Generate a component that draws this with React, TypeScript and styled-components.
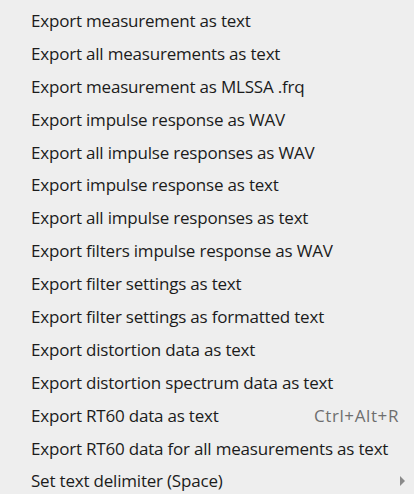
import React from "react";
import styled, { createGlobalStyle } from "styled-components";

const Global = createGlobalStyle`
  html, body { margin: 0; padding: 0; background: #eeeeee; }
  body { width: 414px; height: 494px; overflow: hidden; }
`;

const Menu = styled.ul`
  list-style: none;
  margin: 0;
  padding: 4px 0 0 0;
  width: 414px;
  font-family: "Open Sans", "Noto Sans", sans-serif;
  font-size: 17px;
  letter-spacing: -0.2px;
  color: #1b1b1b;
`;

const Item = styled.li`
  display: flex;
  align-items: center;
  height: 32.9px;
  padding: 0 9px 0 31px;
  white-space: nowrap;
`;

const Label = styled.span`
  flex: 1;
`;

const Shortcut = styled.span`
  color: #6e6e6e;
  letter-spacing: 0.6px;
  margin-right: 6px;
`;

const Arrow = styled.span`
  width: 0;
  height: 0;
  border-top: 5px solid transparent;
  border-bottom: 5px solid transparent;
  border-left: 5px solid #8a8a8a;
`;

type Entry = { label: string; shortcut?: string; submenu?: boolean };

const items: Entry[] = [
  { label: "Export measurement as text" },
  { label: "Export all measurements as text" },
  { label: "Export measurement as MLSSA .frq" },
  { label: "Export impulse response as WAV" },
  { label: "Export all impulse responses as WAV" },
  { label: "Export impulse response as text" },
  { label: "Export all impulse responses as text" },
  { label: "Export filters impulse response as WAV" },
  { label: "Export filter settings as text" },
  { label: "Export filter settings as formatted text" },
  { label: "Export distortion data as text" },
  { label: "Export distortion spectrum data as text" },
  { label: "Export RT60 data as text", shortcut: "Ctrl+Alt+R" },
  { label: "Export RT60 data for all measurements as text" },
  { label: "Set text delimiter (Space)", submenu: true },
];

export default function App() {
  return (
    <>
      <Global />
      <Menu>
        {items.map((it) => (
          <Item key={it.label}>
            <Label>{it.label}</Label>
            {it.shortcut && <Shortcut>{it.shortcut}</Shortcut>}
            {it.submenu && <Arrow />}
          </Item>
        ))}
      </Menu>
    </>
  );
}
